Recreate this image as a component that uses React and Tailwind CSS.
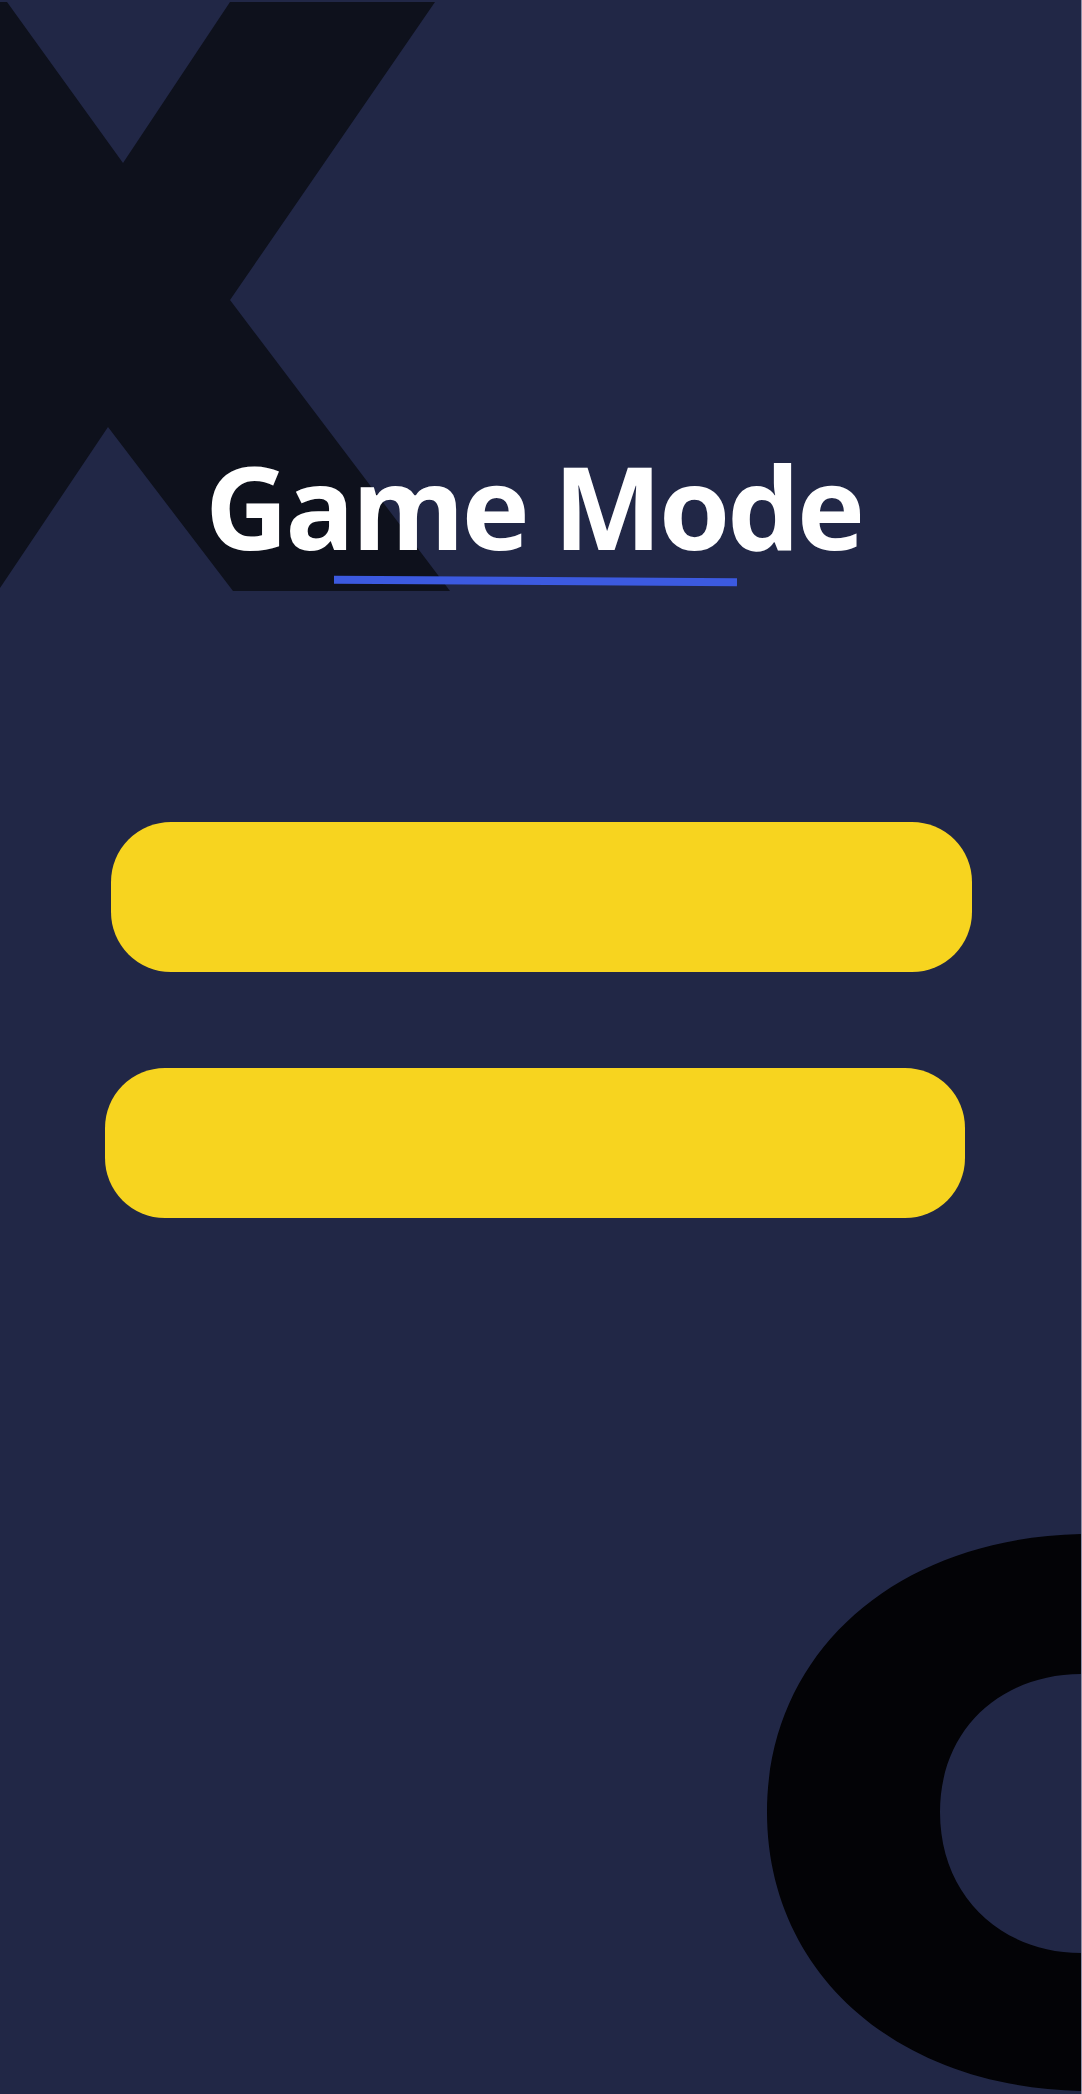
import React from 'react';

function BigX() {
  return (
    <svg
      className="absolute left-0 top-0 pointer-events-none"
      width="460"
      height="600"
      viewBox="0 0 460 600"
    >
      <polygon
        fill="#0e111c"
        points="-140,2 7,2 123,163 230,2 435,2 230,300 450,591 233,591 108,427 -2,591 -150,591 -3,295"
      />
    </svg>
  );
}

function BigO() {
  return (
    <svg
      className="absolute left-0 top-0 pointer-events-none"
      width="1082"
      height="2094"
      viewBox="0 0 1082 2094"
    >
      <path
        fill="#030306"
        fillRule="evenodd"
        d="M1100 1534 L1090 1534 C900 1534 767 1650 767 1812 C767 1975 900 2091 1090 2091 L1100 2091 Z M1100 1674 L1082 1674 C1000 1674 940 1730 940 1812 C940 1895 1000 1953 1082 1953 L1100 1953 Z"
      />
    </svg>
  );
}

export default function App() {
  return (
    <div
      className="relative min-h-[2094px] w-full overflow-hidden bg-[#212746] border-r border-[#8d90a8]"
      style={{ fontFamily: '"Open Sans", "Noto Sans", sans-serif' }}
    >
      <BigX />
      <BigO />

      <div className="relative flex flex-col pt-[448px]">
        <h1 className="pr-[14px] text-center text-[115px] font-bold leading-none tracking-[-3px] text-white">
          Game Mode
        </h1>
        <div className="mt-[14px] ml-[334px] h-[8px] w-[403px] rotate-[0.35deg] bg-[#3c5ae0]" />

        <div className="mt-[237px] flex flex-col gap-[96px]">
          <button className="ml-[111px] h-[150px] w-[861px] rounded-[60px] bg-[#f7d41f]" />
          <button className="ml-[105px] h-[150px] w-[860px] rounded-[60px] bg-[#f7d41f]" />
        </div>
      </div>
    </div>
  );
}
